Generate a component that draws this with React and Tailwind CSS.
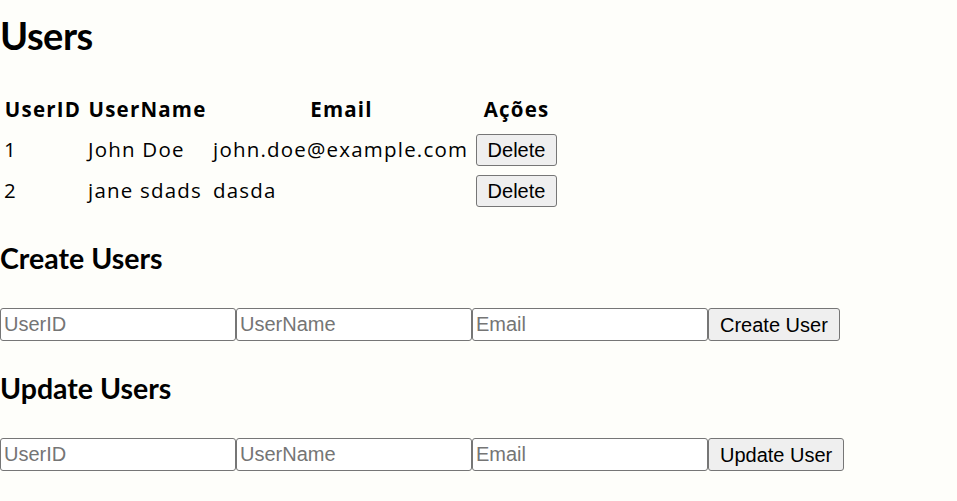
import React, { useState } from "react";

const initialUsers = [
  { id: 1, name: "John Doe", email: "john.doe@example.com" },
  { id: 2, name: "jane sdads", email: "dasda" },
];

const inputClass =
  "w-[236px] h-[33px] px-[3px] border border-[#767676] rounded-[3px] bg-white text-[20px] text-black placeholder:text-[#757575] font-['Liberation_Sans',Arial,sans-serif] outline-none";

const buttonClass =
  "h-[33px] px-[11px] border border-[#767676] rounded-[3px] bg-[#efefef] text-[20px] text-black font-['Liberation_Sans',Arial,sans-serif]";

function UserForm({ label, onSubmit }) {
  const [form, setForm] = useState({ id: "", name: "", email: "" });

  const change = (key) => (e) => setForm({ ...form, [key]: e.target.value });

  return (
    <div className="flex">
      <input className={inputClass} placeholder="UserID" value={form.id} onChange={change("id")} />
      <input className={inputClass} placeholder="UserName" value={form.name} onChange={change("name")} />
      <input className={inputClass} placeholder="Email" value={form.email} onChange={change("email")} />
      <button className={buttonClass} onClick={() => onSubmit(form)}>
        {label}
      </button>
    </div>
  );
}

export default function App() {
  const [users, setUsers] = useState(initialUsers);

  const deleteUser = (id) => setUsers(users.filter((u) => u.id !== id));

  const createUser = (form) => {
    if (!form.id) return;
    setUsers([...users, { id: Number(form.id), name: form.name, email: form.email }]);
  };

  const updateUser = (form) => {
    setUsers(
      users.map((u) =>
        String(u.id) === form.id ? { ...u, name: form.name, email: form.email } : u
      )
    );
  };

  return (
    <div className="min-h-[501px] bg-[#fefefa] text-black font-['Open_Sans','Noto_Sans',sans-serif]">
      <h1 className="pt-[11px] text-[38px] leading-[48px] font-bold tracking-[-0.5px] font-['Lato',sans-serif]">
        Users
      </h1>

      {/* Users table */}
      <table className="mt-[30px] table-fixed border-separate border-spacing-[2px] text-[20.5px] tracking-[1.2px]">
        <thead>
          <tr className="h-[37px]">
            <th className="w-[82px] px-[2px] font-bold text-center">UserID</th>
            <th className="w-[123px] px-[2px] font-bold text-center">UserName</th>
            <th className="w-[261px] px-[2px] font-bold text-center">Email</th>
            <th className="w-[85px] px-[2px] font-bold text-center">Ações</th>
          </tr>
        </thead>
        <tbody>
          {users.map((u) => (
            <tr key={u.id} className="h-[39px]">
              <td className="px-[2px] align-middle">{u.id}</td>
              <td className="px-[2px] align-middle whitespace-nowrap">{u.name}</td>
              <td className="px-[2px] align-middle whitespace-nowrap">{u.email}</td>
              <td className="px-[2px] align-middle tracking-normal">
                <button
                  className="w-[81px] h-[32px] border border-[#767676] rounded-[3px] bg-[#efefef] text-[20px] font-['Liberation_Sans',Arial,sans-serif]"
                  onClick={() => deleteUser(u.id)}
                >
                  Delete
                </button>
              </td>
            </tr>
          ))}
        </tbody>
      </table>

      <h2 className="mt-[28px] text-[28.5px] leading-[36px] font-bold font-['Lato',sans-serif]">Create Users</h2>
      <div className="mt-[32px]">
        <UserForm label="Create User" onSubmit={createUser} />
      </div>

      <h2 className="mt-[29px] text-[28.5px] leading-[36px] font-bold font-['Lato',sans-serif]">Update Users</h2>
      <div className="mt-[32px]">
        <UserForm label="Update User" onSubmit={updateUser} />
      </div>
    </div>
  );
}
